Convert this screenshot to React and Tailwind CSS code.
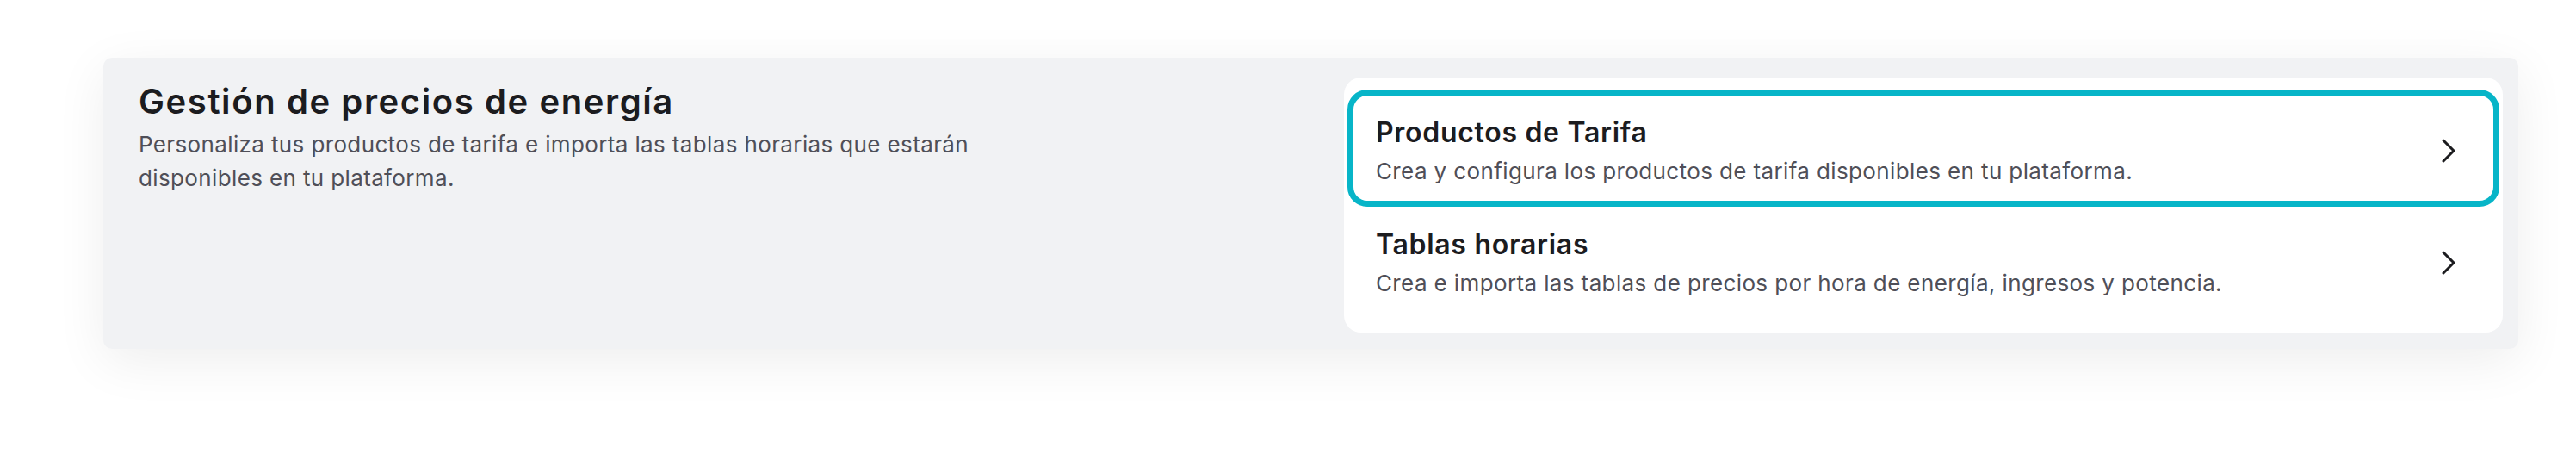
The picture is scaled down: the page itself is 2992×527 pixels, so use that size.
import React, { useState } from "react";

const items = [
  {
    id: "productos",
    title: "Productos de Tarifa",
    description: "Crea y configura los productos de tarifa disponibles en tu plataforma.",
  },
  {
    id: "tablas",
    title: "Tablas horarias",
    description: "Crea e importa las tablas de precios por hora de energía, ingresos y potencia.",
  },
];

function Chevron() {
  return (
    <svg width="16" height="28" viewBox="0 0 16 28" fill="none" className="shrink-0">
      <polyline
        points="2,2 14,14 2,26"
        stroke="#1c1c1f"
        strokeWidth="3"
        strokeLinecap="round"
        strokeLinejoin="round"
      />
    </svg>
  );
}

export default function App() {
  const [selected, setSelected] = useState("productos");

  return (
    <div
      className="min-h-[527px] bg-white pt-[67px] pl-[120px] pr-[67px]"
      style={{ fontFamily: "Inter, 'Noto Sans', sans-serif" }}
    >
      {/* CARD */}
      <div className="flex rounded-[10px] bg-[#f1f2f4] shadow-[0_14px_60px_rgba(0,0,0,0.07)]">
        {/* LEFT */}
        <div className="flex-1 pl-[41px] pt-[23px]">
          <h2 className="text-[40px] leading-[56px] font-semibold tracking-[1.6px] text-[#1c1c1f]">
            Gestión de precios de energía
          </h2>
          <p className="mt-[2px] max-w-[1040px] text-[26px] leading-[39px] tracking-[0.37px] text-[#4f4f58]">
            Personaliza tus productos de tarifa e importa las tablas horarias que estarán disponibles en tu plataforma.
          </p>
        </div>

        {/* RIGHT */}
        <div className="mt-[23px] mr-[18px] mb-[19px] w-[1346px] rounded-[20px] bg-white px-[7px] pt-[17px] pb-[19px]">
          {items.map((it) => {
            const active = selected === it.id;
            return (
              <button
                key={it.id}
                onClick={() => setSelected(it.id)}
                className={
                  "flex h-[130px] w-full items-start justify-between rounded-[20px] pl-[30px] pr-[48px] pt-[25px] text-left " +
                  (active
                    ? "outline-[7px] outline-solid outline-[#07b5c8] -outline-offset-4"
                    : "outline-none")
                }
              >
                <div>
                  <div className="text-[32px] leading-[44px] font-semibold tracking-[0.7px] text-[#1c1c1f]">
                    {it.title}
                  </div>
                  <div className="mt-[3px] text-[26px] leading-[39px] tracking-[0.38px] text-[#4f4f58]">
                    {it.description}
                  </div>
                </div>
                <div className="self-center -mt-[20px]">
                  <Chevron />
                </div>
              </button>
            );
          })}
        </div>
      </div>
    </div>
  );
}
